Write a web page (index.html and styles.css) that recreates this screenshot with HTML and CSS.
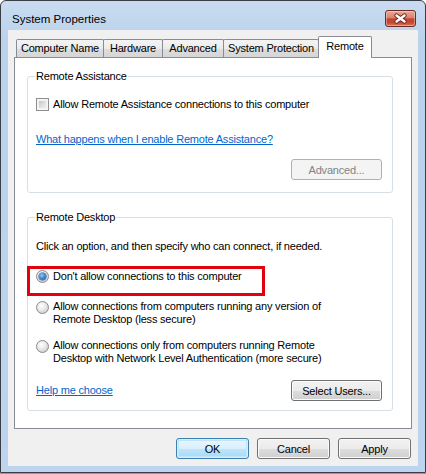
FILE: index.html
```html
<!DOCTYPE html>
<html lang="en">
<head>
<meta charset="utf-8">
<title>System Properties</title>
<link rel="stylesheet" href="styles.css">
</head>
<body>
<div class="window">
  <div class="titlebar">
    <span class="title">System Properties</span>
    <button class="close" aria-label="Close">
      <svg width="29" height="15" viewBox="0 0 29 15">
        <path d="M10.5 4.5 L18.5 10.5 M18.5 4.5 L10.5 10.5" stroke="#6b2a20" stroke-width="4.4" stroke-linecap="round" fill="none"/>
        <path d="M10.5 4.5 L18.5 10.5 M18.5 4.5 L10.5 10.5" stroke="#ffffff" stroke-width="2.4" stroke-linecap="round" fill="none"/>
      </svg>
    </button>
  </div>
  <div class="client">
    <div class="tabs">
      <div class="tab tab-cn">Computer Name</div>
      <div class="tab tab-hw">Hardware</div>
      <div class="tab tab-adv">Advanced</div>
      <div class="tab tab-sp">System Protection</div>
      <div class="tab tab-remote active">Remote</div>
    </div>
    <div class="panel">
      <fieldset class="group group-ra">
        <legend>Remote Assistance</legend>
        <div class="check-row"><span class="checkbox"></span><span>Allow Remote Assistance connections to this computer</span></div>
        <a class="link link-ra" href="#">What happens when I enable Remote Assistance?</a>
        <div class="btn-row"><button class="btn btn-wide disabled">Advanced...</button></div>
      </fieldset>
      <fieldset class="group group-rd">
        <legend>Remote Desktop</legend>
        <p class="intro">Click an option, and then specify who can connect, if needed.</p>
        <div class="radio-row first highlighted"><span class="radio checked"></span><span>Don't allow connections to this computer</span></div>
        <div class="radio-row second"><span class="radio"></span><span>Allow connections from computers running any version of<br>Remote Desktop (less secure)</span></div>
        <div class="radio-row third"><span class="radio"></span><span>Allow connections only from computers running Remote<br>Desktop with Network Level Authentication (more secure)</span></div>
        <div class="foot-row"><a class="link" href="#">Help me choose</a><button class="btn btn-wide">Select Users...</button></div>
      </fieldset>
    </div>
    <div class="actions">
      <button class="btn default">OK</button>
      <button class="btn">Cancel</button>
      <button class="btn">Apply</button>
    </div>
  </div>
</div>
</body>
</html>
```

FILE: styles.css
```css
* { box-sizing: border-box; }
html, body { margin: 0; padding: 0; }
body {
  height: 474px;
  background: linear-gradient(#ffffff 0, #ffffff 473px, #2fc4d2 473px);
  font-family: "Liberation Sans", Arial, sans-serif;
  font-size: 11px;
  letter-spacing: -0.2px;
  color: #000;
}
.window {
  width: 426px;
  height: 473px;
  border: 1px solid #3a3f47;
  border-radius: 6px 6px 0 0;
  background: linear-gradient(#c9dcf1 0, #bad2eb 40px, #bcd4ed 100%);
  display: flex;
  flex-direction: column;
  padding: 0 7px 6px;
}
.titlebar {
  height: 29px;
  flex: none;
  display: flex;
  justify-content: space-between;
  align-items: flex-start;
  padding-left: 4px;
}
.title {
  margin-top: 11px;
  line-height: 14px;
  font-size: 11.5px;
  letter-spacing: 0;
}
.close {
  width: 31px;
  height: 17px;
  margin: 9px 2px 0 0;
  padding: 0;
  border: 1px solid #6d2b22;
  border-radius: 3px;
  background: linear-gradient(#eaa899 0, #d98370 45%, #c6452e 52%, #c34630 75%, #d6795f 100%);
  box-shadow: inset 0 0 0 1px rgba(255,255,255,0.35);
  display: flex;
  align-items: center;
  justify-content: center;
}
.close svg { display: block; }
.client {
  flex: 1;
  background: #f0f0f0;
  display: flex;
  flex-direction: column;
  padding: 0 6px;
}
.tabs {
  margin-top: 6px;
  height: 21px;
  display: flex;
  align-items: flex-end;
  padding-left: 2px;
}
.tab {
  height: 18px;
  line-height: 17px;
  border: 1px solid #898c95;
  border-bottom: 0;
  border-radius: 2px 2px 0 0;
  margin-right: -1px;
  text-align: center;
  white-space: nowrap;
  background: linear-gradient(#f4f4f4 0, #ebebeb 50%, #dddddd 51%, #d6d6d6 100%);
}
.tab-cn { width: 88px; }
.tab-hw { width: 60px; }
.tab-adv { width: 62px; }
.tab-sp { width: 96px; }
.tab-remote { width: 54px; }
.tab.active {
  height: 22px;
  line-height: 18px;
  margin-bottom: -1px;
  background: #fff;
  position: relative;
  z-index: 1;
}
.panel {
  height: 372px;
  flex: none;
  border: 1px solid #898c95;
  background: #fff;
  padding-top: 12px;
}
.group {
  margin: 0 18px 0 12px;
  border: 1px solid #d5dfe5;
  border-radius: 3px;
  padding: 0 0 0 8px;
  min-width: 0;
}
.group legend {
  padding: 0 1px;
  margin-left: -1px;
  line-height: 13px;
}
.group-ra { padding-bottom: 12px; }
.group-rd { margin-top: 18px; padding-bottom: 9px; }
.check-row {
  margin-top: 15px;
  height: 13px;
  line-height: 13px;
  display: flex;
  align-items: center;
  gap: 4px;
}
.checkbox {
  width: 13px;
  height: 13px;
  flex: none;
  border: 1px solid #8e8f8f;
  background: linear-gradient(135deg, #b4b8be 0, #dfe1e4 55%, #f2f2f2 100%);
  box-shadow: inset 0 0 0 2px #f4f4f4;
}
.link {
  color: #0066cc;
  text-decoration: underline;
  line-height: 13px;
}
.link-ra { display: block; margin-top: 22px; width: max-content; }
.btn-row {
  margin-top: 13px;
  display: flex;
  justify-content: flex-end;
  padding-right: 10px;
}
.btn {
  width: 73px;
  height: 21px;
  padding: 0;
  font: inherit;
  letter-spacing: inherit;
  color: #000;
  border: 1px solid #707070;
  border-radius: 3px;
  background: linear-gradient(#f2f2f2 0, #ebebeb 50%, #dddddd 51%, #cfcfcf 100%);
  box-shadow: inset 0 0 0 1px #fbfbfb;
}
.btn-wide { width: 91px; }
.btn.disabled {
  color: #838383;
  border-color: #adb2b5;
  background: #f4f4f4;
  box-shadow: none;
}
.btn.default {
  border-color: #3c7fb1;
  background: linear-gradient(#eaf6fd 0, #d9f0fc 50%, #bee6fd 51%, #a7d9f5 100%);
  box-shadow: inset 0 0 0 1px #d6effc, inset 0 0 0 2px #c2e4f6;
}
.intro {
  margin: 16px 0 0;
  line-height: 13px;
}
.radio-row {
  display: flex;
  align-items: flex-start;
  gap: 4px;
  line-height: 13px;
}
.radio-row.first { margin-top: 17px; }
.radio-row.second { margin-top: 17px; }
.radio-row.third { margin-top: 13px; }
.radio-row.second .radio, .radio-row.third .radio { margin-top: 1px; }
.radio {
  width: 13px;
  height: 13px;
  flex: none;
  border-radius: 50%;
  border: 1px solid #8a8a8a;
  background: radial-gradient(circle at 40% 35%, #ffffff 0, #eeeeee 35%, #cfcfcf 80%, #bdbdbd 100%);
  position: relative;
}
.radio.checked::after {
  content: "";
  position: absolute;
  left: 2px;
  top: 2px;
  width: 7px;
  height: 7px;
  border-radius: 50%;
  background: radial-gradient(circle at 40% 35%, #8fd0fb 0, #3d8ad6 45%, #1c5aa3 100%);
  box-shadow: 0 0 0 0.5px #1d4f8a;
}
.highlighted { position: relative; }
.highlighted::before {
  content: "";
  position: absolute;
  left: -9px;
  top: -4px;
  width: 232px;
  height: 24px;
  border: 3px solid #e3000f;
}
.foot-row {
  margin-top: 15px;
  height: 21px;
  display: flex;
  align-items: center;
  justify-content: space-between;
  padding-right: 10px;
}
.actions {
  margin-top: 9px;
  margin-right: 1px;
  display: flex;
  justify-content: flex-end;
  gap: 8px;
}
```
